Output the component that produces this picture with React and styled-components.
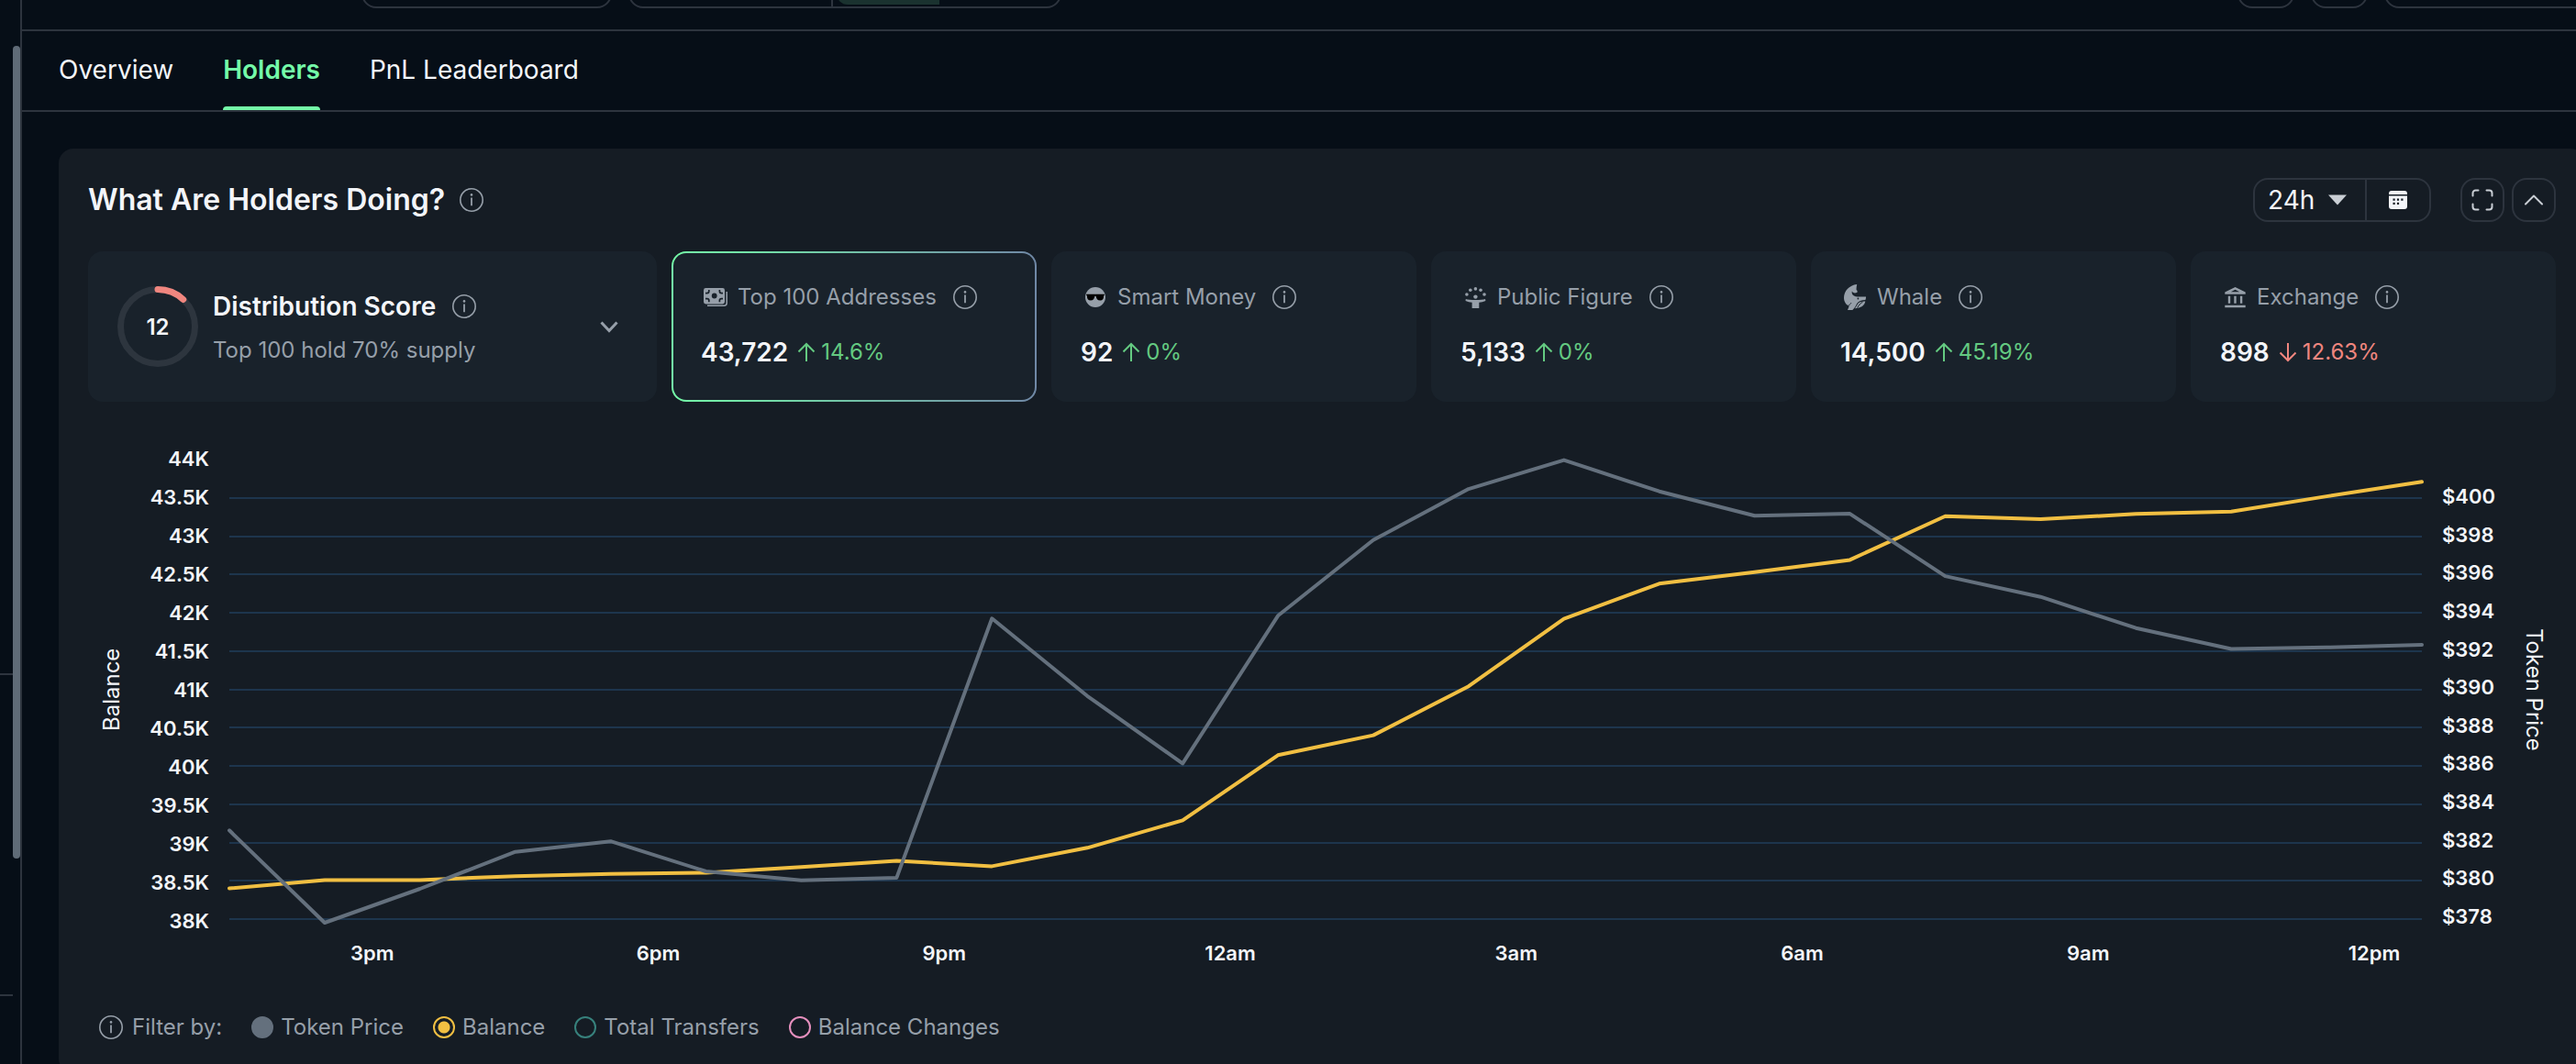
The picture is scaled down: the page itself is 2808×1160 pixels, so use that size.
import React, { useState } from "react";
import styled, { createGlobalStyle } from "styled-components";

const color = {
  page: "#060e17",
  panel: "#151c24",
  card: "#19222b",
  line: "#2d343e",
  grid: "#1d354d",
  text: "#f3f5f9",
  muted: "#969fa9",
  accent: "#74faa8",
  up: "#64ca81",
  down: "#f0867f",
  price: "#64707d",
  balance: "#f1bf42",
  transfers: "#37817c",
  changes: "#e58fbd",
};

const GlobalStyle = createGlobalStyle`
  * { box-sizing: border-box; }
  body {
    margin: 0;
    background: ${color.page};
    color: ${color.text};
    font-family: Inter, "Liberation Sans", sans-serif;
  }
  button, select, input { font: inherit; color: inherit; margin: 0; padding: 0; }
  svg { display: block; flex: none; }
`;

const Shell = styled.div`
  display: grid;
  grid-template-columns: 24px minmax(0, 1fr);
  height: 100vh;
  overflow: hidden;
`;

const Rail = styled.aside`
  display: grid;
  grid-template-columns: 14px 8px;
  border-right: 2px solid ${color.line};
`;

const RailSections = styled.div`
  display: grid;
  grid-template-rows: 736px 350px 1fr;
`;

const RailSection = styled.div`
  border-bottom: 2px solid ${color.line};
`;

const RailTrack = styled.div`
  padding-top: 50px;
`;

const RailThumb = styled.div`
  height: 886px;
  border-radius: 4px;
  background: #5f6b77;
`;

const Main = styled.main`
  min-width: 0;
`;

const TopBar = styled.header`
  display: flex;
  align-items: flex-end;
  gap: 18px;
  height: 34px;
  padding: 0 0 23px 370px;
  border-bottom: 2px solid ${color.line};
  overflow: hidden;
`;

const TopButton = styled.button`
  flex: none;
  width: ${(p) => p.$width}px;
  height: 64px;
  border: 2px solid ${color.line};
  border-radius: 16px;
  background: none;
`;

const TopGroup = styled.div`
  display: flex;
  flex: none;
  width: 472px;
  height: 64px;
  border: 2px solid ${color.line};
  border-radius: 16px;
`;

const TopGroupCell = styled.div`
  width: 221px;
  border-right: 2px solid ${color.line};
`;

const TopGroupActive = styled.div`
  width: 112px;
  margin: 2px 0 2px 4px;
  border-radius: 12px 0 0 12px;
  background: #1a322f;
`;

const Spacer = styled.div`
  flex: 1;
`;

const TopRight = styled.div`
  display: flex;
  gap: 18px;
  margin-right: -18px;
`;

const Tabs = styled.nav`
  display: flex;
  gap: 54px;
  padding: 0 40px;
  border-bottom: 2px solid ${color.line};
`;

const Tab = styled.a`
  display: flex;
  flex-direction: column;
  justify-content: space-between;
  height: 86px;
  padding-top: 24px;
  font-size: 28px;
  line-height: 36px;
  font-weight: ${(p) => (p.$active ? 600 : 400)};
  color: ${(p) => (p.$active ? color.accent : color.text)};
  text-decoration: none;

  &::after {
    content: "";
    height: 4px;
    border-radius: 4px 4px 0 0;
    background: ${(p) => (p.$active ? color.accent : "transparent")};
  }
`;

const Panel = styled.section`
  display: flex;
  flex-direction: column;
  margin: 40px -10px 0 40px;
  padding: 32px;
  border-radius: 16px;
  background: ${color.panel};
`;

const PanelHeader = styled.div`
  display: flex;
  align-items: center;
  gap: 16px;
  height: 48px;
`;

const Title = styled.h2`
  margin: 0;
  font-size: 32px;
  line-height: 40px;
  font-weight: 600;
`;

const RangeGroup = styled.div`
  display: flex;
  height: 48px;
  border: 2px solid ${color.line};
  border-radius: 16px;
  margin-right: 16px;
`;

const RangeField = styled.label`
  display: flex;
  align-items: center;
  gap: 14px;
  width: 122px;
  padding-left: 14px;
  border-right: 2px solid ${color.line};
`;

const RangeSelect = styled.select`
  appearance: none;
  width: 52px;
  border: 0;
  background: none;
  font-size: 28px;
  line-height: 36px;
`;

const RangeButton = styled.button`
  display: grid;
  place-items: center;
  width: 68px;
  border: 0;
  background: none;
`;

const SquareGroup = styled.div`
  display: flex;
  gap: 8px;
`;

const SquareButton = styled.button`
  display: grid;
  place-items: center;
  width: 48px;
  height: 48px;
  border: 2px solid ${color.line};
  border-radius: 16px;
  background: none;
`;

const Cards = styled.div`
  display: grid;
  grid-template-columns: 620px repeat(5, minmax(0, 1fr));
  gap: 16px;
  margin-top: 32px;
`;

const Card = styled.article`
  padding: 30px 30px 34px;
  border: 2px solid transparent;
  border-radius: 16px;
  background: ${(p) =>
    p.$selected
      ? `linear-gradient(${color.card}, ${color.card}) padding-box, linear-gradient(90deg, ${color.accent}, #7088a6) border-box`
      : color.card};
`;

const ScoreCard = styled.article`
  display: flex;
  align-items: center;
  gap: 16px;
  padding: 0 42px 0 32px;
  border-radius: 16px;
  background: ${color.card};
`;

const ScoreRing = styled.div`
  display: grid;
  place-items: center;
  font-size: 24px;
  font-weight: 600;

  > * { grid-area: 1 / 1; }
`;

const ScoreText = styled.div`
  flex: 1;
  padding-top: 4px;
`;

const ScoreTitle = styled.h3`
  display: flex;
  align-items: center;
  gap: 18px;
  margin: 0 0 12px;
  font-size: 28px;
  line-height: 36px;
  font-weight: 600;
`;

const ScoreNote = styled.p`
  margin: 0;
  font-size: 24px;
  line-height: 36px;
  color: ${color.muted};
`;

const PlainButton = styled.button`
  border: 0;
  background: none;
`;

const CardLabel = styled.h3`
  display: flex;
  align-items: center;
  margin: 0 0 24px;
  font-size: 24px;
  line-height: 36px;
  font-weight: 400;
  color: ${color.muted};
  white-space: nowrap;
`;

const CardIcon = styled.span`
  display: grid;
  place-items: center;
  width: 32px;
  height: 32px;
  margin-right: 8px;
`;

const CardName = styled.span`
  margin-right: 18px;
`;

const CardFigures = styled.div`
  display: flex;
  align-items: center;
`;

const CardValue = styled.strong`
  margin-right: 10px;
  font-size: 28px;
  line-height: 36px;
  font-weight: 600;
`;

const Change = styled.span`
  display: flex;
  align-items: center;
  gap: 6px;
  font-size: 24px;
  line-height: 36px;
  color: ${(p) => (p.$down ? color.down : color.up)};
`;

const Chart = styled.figure`
  display: grid;
  grid-template-columns: 32px 112px minmax(0, 1fr) 106px 32px;
  margin: 49px 8px 0 10px;
`;

const AxisTitle = styled.div`
  display: flex;
  align-items: center;
  justify-content: center;
  writing-mode: vertical-rl;
  font-size: 24px;
  line-height: 32px;
  transform: ${(p) => (p.$up ? "rotate(180deg)" : "none")};
`;

const Ticks = styled.div`
  display: flex;
  flex-direction: column;
  justify-content: space-between;
  padding: ${(p) => (p.$right ? "41px 0 5px 22px" : "0 22px 0 0")};
  text-align: ${(p) => (p.$right ? "left" : "right")};
  font-size: 22px;
  line-height: 26px;
  font-weight: 600;
`;

const Plot = styled.svg`
  width: 100%;
  height: 530px;
  overflow: visible;
`;

const Hours = styled.div`
  grid-column: 3;
  display: grid;
  grid-template-columns: repeat(8, 1fr);
  width: calc(100% * 24 / 23);
  margin-top: 9px;
  text-align: center;
  font-size: 22px;
  line-height: 26px;
  font-weight: 600;
`;

const Legend = styled.div`
  display: flex;
  align-items: center;
  gap: 32px;
  margin-top: 50px;
  padding-left: 12px;
  font-size: 24px;
  line-height: 36px;
  color: ${color.muted};
`;

const LegendLead = styled.span`
  display: flex;
  align-items: center;
  gap: 10px;
`;

const LegendItem = styled.label`
  display: flex;
  align-items: center;
  gap: 8px;
`;

const Mark = styled.input`
  appearance: none;
  width: 24px;
  height: 24px;
  border: 2px solid ${(p) => p.$color};
  border-radius: 50%;

  &[type="checkbox"]:checked { background: ${(p) => p.$color}; }
  &[type="radio"]:checked {
    background: radial-gradient(circle, ${(p) => p.$color} 6px, transparent 7px);
  }
`;

const InfoIcon = () => (
  <svg width="26" height="26" viewBox="0 0 26 26" fill="none" stroke={color.muted} aria-hidden="true">
    <circle cx="13" cy="13" r="12.2" strokeWidth="1.6" />
    <path d="M13 10.6v8.6" strokeWidth="1.8" />
    <circle cx="13" cy="7.4" r="1.3" fill={color.muted} stroke="none" />
  </svg>
);

const MoneyIcon = () => (
  <svg width="26" height="20" viewBox="0 0 26 20" aria-hidden="true">
    <rect width="23" height="17.5" rx="2.4" fill={color.muted} />
    <circle cx="11.7" cy="8.5" r="2.9" fill={color.card} />
    <path
      d="M5.8 2v1.6a2 2 0 0 1-2 2H2M17.4 2v1.6a2 2 0 0 0 2 2H21M5.8 15.2v-1.6a2 2 0 0 0-2-2H2M17.4 15.2v-1.6a2 2 0 0 1 2-2H21"
      fill="none" stroke={color.card} strokeWidth="1.7"
    />
    <path d="M25.2 4v12.2a3 3 0 0 1-3 3H4" fill="none" stroke={color.muted} strokeWidth="1.5" />
  </svg>
);

const ShadesIcon = () => (
  <svg width="22" height="22" viewBox="0 0 22 22" aria-hidden="true">
    <circle cx="11" cy="11" r="11" fill={color.muted} />
    <path d="M1.2 7.8h19.6v1.1l-.7.5c0 3.2-1 5.1-4 5.1-2.9 0-4-1.9-4.4-4.6h-1.4C9.9 12.6 8.8 14.5 5.9 14.5c-3 0-4-1.9-4-5.1l-.7-.5z" fill="#000" />
  </svg>
);

const FigureIcon = () => (
  <svg width="23" height="23" viewBox="0 0 23 23" fill={color.muted} aria-hidden="true">
    <circle cx="1.9" cy="8" r="1.8" />
    <circle cx="5.8" cy="3.2" r="1.8" />
    <circle cx="11.4" cy="1.9" r="1.8" />
    <circle cx="17" cy="3.2" r="1.8" />
    <circle cx="21" cy="8" r="1.8" />
    <circle cx="11.4" cy="10.6" r="2.2" />
    <path d="M.8 12.9c3.4 1.5 17.8 1.5 21.2 0l.4 2.1c-2.4 1-4.7 1.5-7.1 1.7V23H7.6v-6.3C5.2 16.5 2.9 16 .5 15z" />
  </svg>
);

const WhaleIcon = () => (
  <svg width="24" height="28" viewBox="0 0 24 28" fill={color.muted} aria-hidden="true">
    <path fillRule="evenodd" d="M14.2 0C13.8 2 13.4 4 13.6 6c.8.3 1.3 1.3.9 2.7-1.5.7-2.9 1-4.4.2-.6-.4-1-.9-1.2-1.5-.5 1.4-.3 3 .7 4 1.6 1.7 4.2 2 7.2 2H24c.1 1.5-.2 2.7-.6 3.7-4.3 0-7.4 1.3-9.3 4-.9 1.5-1.8 4.7-4.8 6.8L4 28l1.7-4.2C2 22.2 0 18.7 0 14.6 0 7.5 5.5 1 14.2 0zM15.4 14.6a.9.9 0 1 0 0 1.8.9.9 0 0 0 0-1.8z" />
    <path d="M23.3 18.6c-.6 4.2-4.8 7.6-11.3 7.7 1.3-1.7 2.2-3.4 3-4.8 1.5-2.1 4.4-3 8.3-2.9z" />
    <path d="M20.5 19.2c-2.6 1.4-4.6 3.8-5.8 6.5" fill="none" stroke={color.card} strokeWidth="1" />
    <path d="M3.2 23.6c2-.2 3.8-1.6 4.8-3.6" fill="none" stroke={color.card} strokeWidth=".8" />
  </svg>
);

const BankIcon = () => (
  <svg width="23" height="23" viewBox="0 0 23 23" fill={color.muted} aria-hidden="true">
    <path fillRule="evenodd" d="M11.5 0 22.7 5.6V7.7H.3V5.6zM11.5 2.7 6.8 5.3h9.4z" />
    <path d="M3.8 9.7h2.4v8H3.8zM10.3 9.7h2.4v8h-2.4zM16.9 9.7h2.4v8h-2.4zM.3 19.8h22.4v2.5H.3z" />
  </svg>
);

const Arrow = ({ down }) => (
  <svg width="20" height="22" viewBox="0 0 20 22" fill="none" stroke="currentColor" strokeWidth="2" aria-hidden="true">
    <path d={down ? "M10 1v19M1.5 11.5 10 20l8.5-8.5" : "M10 21V2M1.5 10.5 10 2l8.5 8.5"} />
  </svg>
);

const CaretIcon = () => (
  <svg width="20" height="12" viewBox="0 0 20 12" fill="#c9ced4" aria-hidden="true">
    <path d="M0 .5h20l-10 11z" />
  </svg>
);

const CalendarIcon = () => (
  <svg width="20" height="20" viewBox="0 0 20 20" aria-hidden="true">
    <path d="M3 0h14a3 3 0 0 1 3 3v1H0V3a3 3 0 0 1 3-3zM0 5.5h20V17a3 3 0 0 1-3 3H3a3 3 0 0 1-3-3z" fill={color.text} />
    <path d="M4.5 8.5h2.2v2.2H4.5zM8.9 8.5h2.2v2.2H8.9zM13.3 8.5h2.2v2.2h-2.2zM4.5 12.7h2.2v2.2H4.5zM8.9 12.7h2.2v2.2H8.9z" fill={color.panel} />
  </svg>
);

const ExpandIcon = () => (
  <svg width="24" height="24" viewBox="0 0 24 24" fill="none" stroke="#c9ced4" strokeWidth="2" strokeLinecap="round" aria-hidden="true">
    <path d="M1.5 7.5v-3a3 3 0 0 1 3-3h3M16.5 1.5h3a3 3 0 0 1 3 3v3M22.5 16.5v3a3 3 0 0 1-3 3h-3M7.5 22.5h-3a3 3 0 0 1-3-3v-3" />
  </svg>
);

const ChevronUp = () => (
  <svg width="20" height="12" viewBox="0 0 20 12" fill="none" stroke="#c9ced4" strokeWidth="2" strokeLinecap="round" strokeLinejoin="round" aria-hidden="true">
    <path d="m1 10.5 9-9 9 9" />
  </svg>
);

const ChevronDown = () => (
  <svg width="20" height="13" viewBox="0 0 20 13" fill="none" stroke={color.muted} strokeWidth="3" aria-hidden="true">
    <path d="m1.5 1.5 8.5 9 8.5-9" />
  </svg>
);

const groups = [
  { name: "Top 100 Addresses", value: "43,722", change: "14.6%", Icon: MoneyIcon, selected: true },
  { name: "Smart Money", value: "92", change: "0%", Icon: ShadesIcon },
  { name: "Public Figure", value: "5,133", change: "0%", Icon: FigureIcon },
  { name: "Whale", value: "14,500", change: "45.19%", Icon: WhaleIcon },
  { name: "Exchange", value: "898", change: "12.63%", Icon: BankIcon, down: true },
];

const balances = [
  38.4, 38.51, 38.51, 38.56, 38.59, 38.605, 38.68, 38.76, 38.69, 38.93, 39.29, 40.14,
  40.4, 41.04, 41.92, 42.38, 42.53, 42.69, 43.26, 43.22, 43.29, 43.32, 43.52, 43.71,
];
const prices = [
  382.63, 377.81, 379.58, 381.51, 382.06, 380.49, 380.02, 380.16, 393.7, 389.65, 386.13, 393.84,
  397.8, 400.46, 401.97, 400.34, 399.07, 399.17, 395.91, 394.83, 393.2, 392.11, 392.19, 392.33,
];
const balanceTicks = ["44K", "43.5K", "43K", "42.5K", "42K", "41.5K", "41K", "40.5K", "40K", "39.5K", "39K", "38.5K", "38K"];
const priceTicks = Array.from({ length: 12 }, (_, i) => `$${400 - i * 2}`);
const hours = ["3pm", "6pm", "9pm", "12am", "3am", "6am", "9am", "12pm"];

const PLOT_BOTTOM = 515;
const PLOT_HEIGHT = 501;
const toPoints = (values, min, max) =>
  values.map((v, i) => `${i * 100},${(PLOT_BOTTOM - ((v - min) / (max - min)) * PLOT_HEIGHT).toFixed(1)}`).join(" ");

const HoldersChart = () => (
  <Chart>
    <AxisTitle $up>Balance</AxisTitle>
    <Ticks>{balanceTicks.map((t) => <span key={t}>{t}</span>)}</Ticks>
    <Plot viewBox="0 0 2300 530" preserveAspectRatio="none" role="img" aria-label="Balance and token price over 24 hours">
      {priceTicks.map((t, i) => {
        const y = Math.round(PLOT_BOTTOM - (i * PLOT_HEIGHT) / 12);
        return <line key={t} x1="0" x2="2300" y1={y} y2={y} stroke={color.grid} strokeWidth="2" />;
      })}
      <g fill="none" strokeWidth="4" strokeLinecap="round" strokeLinejoin="round">
        <polyline points={toPoints(balances, 38, 44)} stroke={color.balance} vectorEffect="non-scaling-stroke" />
        <polyline points={toPoints(prices, 378, 402)} stroke={color.price} vectorEffect="non-scaling-stroke" />
      </g>
    </Plot>
    <Ticks $right>{priceTicks.map((t) => <span key={t}>{t}</span>)}</Ticks>
    <AxisTitle>Token Price</AxisTitle>
    <Hours>{hours.map((h) => <span key={h}>{h}</span>)}</Hours>
  </Chart>
);

const metrics = [
  { id: "balance", label: "Balance", tint: color.balance },
  { id: "transfers", label: "Total Transfers", tint: color.transfers },
  { id: "changes", label: "Balance Changes", tint: color.changes },
];

export default function App() {
  const [metric, setMetric] = useState("balance");
  const [showPrice, setShowPrice] = useState(true);

  return (
    <Shell>
      <GlobalStyle />
      <Rail>
        <RailSections>
          <RailSection />
          <RailSection />
        </RailSections>
        <RailTrack><RailThumb /></RailTrack>
      </Rail>
      <Main>
        <TopBar>
          <TopButton $width={273} aria-label="Token" />
          <TopGroup>
            <TopGroupCell />
            <TopGroupActive />
          </TopGroup>
          <Spacer />
          <TopRight>
            <TopButton $width={62} aria-label="Alerts" />
            <TopButton $width={62} aria-label="Share" />
            <TopButton $width={227} aria-label="Trade" />
          </TopRight>
        </TopBar>
        <Tabs>
          <Tab href="#overview">Overview</Tab>
          <Tab href="#holders" $active>Holders</Tab>
          <Tab href="#pnl">PnL Leaderboard</Tab>
        </Tabs>
        <Panel>
          <PanelHeader>
            <Title>What Are Holders Doing?</Title>
            <InfoIcon />
            <Spacer />
            <RangeGroup>
              <RangeField>
                <RangeSelect aria-label="Time range" defaultValue="24h">
                  <option>24h</option>
                </RangeSelect>
                <CaretIcon />
              </RangeField>
              <RangeButton aria-label="Pick dates"><CalendarIcon /></RangeButton>
            </RangeGroup>
            <SquareGroup>
              <SquareButton aria-label="Full screen"><ExpandIcon /></SquareButton>
              <SquareButton aria-label="Collapse"><ChevronUp /></SquareButton>
            </SquareGroup>
          </PanelHeader>

          <Cards>
            <ScoreCard>
              <ScoreRing>
                <svg width="88" height="88" viewBox="0 0 88 88" fill="none" strokeWidth="7" aria-hidden="true">
                  <circle cx="44" cy="44" r="40.5" stroke="#2d353e" />
                  <circle
                    cx="44" cy="44" r="40.5" stroke={color.down} pathLength="100"
                    strokeDasharray="12 100" strokeLinecap="round" transform="rotate(-90 44 44)"
                  />
                </svg>
                <span>12</span>
              </ScoreRing>
              <ScoreText>
                <ScoreTitle>Distribution Score <InfoIcon /></ScoreTitle>
                <ScoreNote>Top 100 hold 70% supply</ScoreNote>
              </ScoreText>
              <PlainButton aria-label="Show score details"><ChevronDown /></PlainButton>
            </ScoreCard>
            {groups.map(({ name, value, change, Icon, selected, down }) => (
              <Card key={name} $selected={selected}>
                <CardLabel>
                  <CardIcon><Icon /></CardIcon>
                  <CardName>{name}</CardName>
                  <InfoIcon />
                </CardLabel>
                <CardFigures>
                  <CardValue>{value}</CardValue>
                  <Change $down={down}><Arrow down={down} />{change}</Change>
                </CardFigures>
              </Card>
            ))}
          </Cards>

          <HoldersChart />

          <Legend>
            <LegendLead><InfoIcon />Filter by:</LegendLead>
            <LegendItem>
              <Mark type="checkbox" $color={color.price} checked={showPrice} onChange={(e) => setShowPrice(e.target.checked)} />
              Token Price
            </LegendItem>
            {metrics.map((m) => (
              <LegendItem key={m.id}>
                <Mark type="radio" name="metric" $color={m.tint} checked={metric === m.id} onChange={() => setMetric(m.id)} />
                {m.label}
              </LegendItem>
            ))}
          </Legend>
        </Panel>
      </Main>
    </Shell>
  );
}
